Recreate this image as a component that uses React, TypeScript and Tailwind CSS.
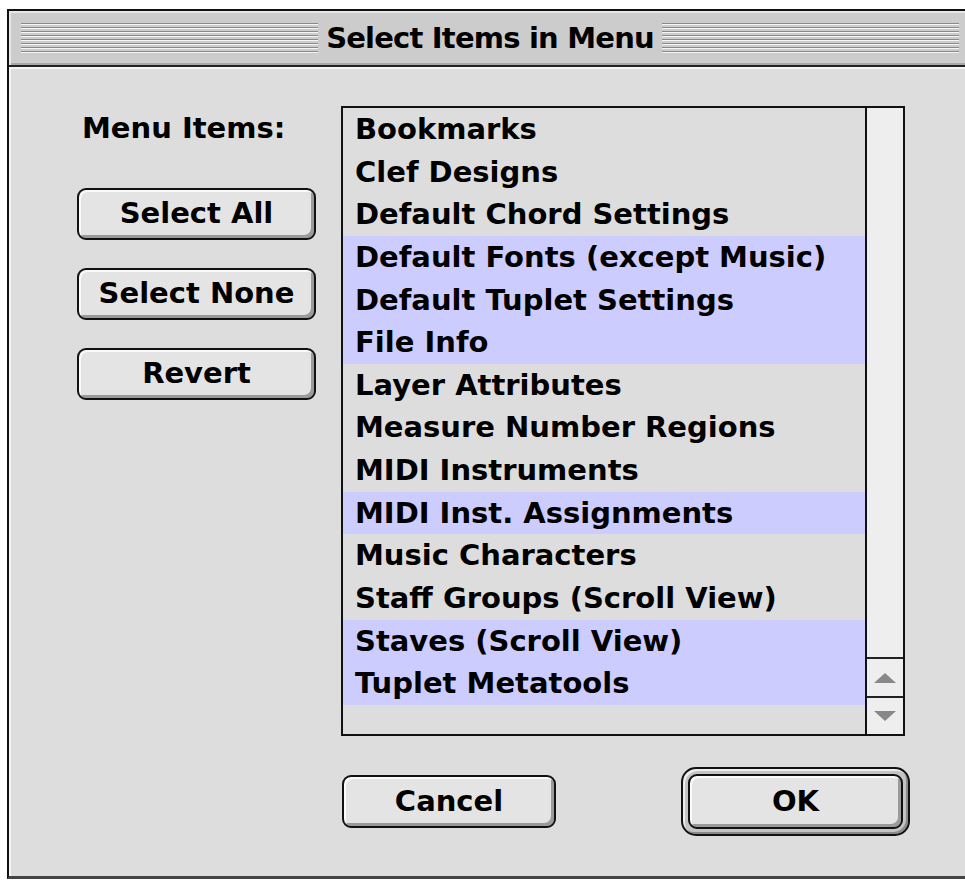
const menuItems = [
  { label: "Bookmarks", selected: false },
  { label: "Clef Designs", selected: false },
  { label: "Default Chord Settings", selected: false },
  { label: "Default Fonts (except Music)", selected: true },
  { label: "Default Tuplet Settings", selected: true },
  { label: "File Info", selected: true },
  { label: "Layer Attributes", selected: false },
  { label: "Measure Number Regions", selected: false },
  { label: "MIDI Instruments", selected: false },
  { label: "MIDI Inst. Assignments", selected: true },
  { label: "Music Characters", selected: false },
  { label: "Staff Groups (Scroll View)", selected: false },
  { label: "Staves (Scroll View)", selected: true },
  { label: "Tuplet Metatools", selected: true },
];

const platinumButton =
  "flex shrink-0 items-center justify-center rounded-[9px] border-2 border-[#111] bg-[#e4e4e4] shadow-[inset_2px_2px_0_#fafafa,inset_-3px_-3px_0_#9a9a9a] text-black";

function Stripes() {
  return (
    <div className="h-[30px] flex-1 bg-[repeating-linear-gradient(to_bottom,#8a8a8a_0px,#8a8a8a_1px,#f6f6f6_1px,#f6f6f6_2px,#cccccc_2px,#cccccc_4px)]" />
  );
}

function Arrow({ up }: { up?: boolean }) {
  return (
    <svg width="24" height="12" viewBox="0 0 24 12">
      {up ? <polygon points="12,1 23,11 1,11" fill="#888" /> : <polygon points="1,1 23,1 12,11" fill="#888" />}
    </svg>
  );
}

export default function App() {
  return (
    <div className="h-screen w-screen overflow-hidden bg-white pl-[7px] pt-[9px] font-['DejaVu_Sans','Liberation_Sans',sans-serif] font-bold text-black">
      <div className="flex h-[870px] w-[966px] flex-col border-l-2 border-t-2 border-r-2 border-[#111] border-b-[3px] border-b-[#444]">
        {/* title bar */}
        <div className="flex h-[54px] shrink-0 items-center bg-[#cccccc] px-[12px] shadow-[inset_2px_2px_0_#e8e8e8,inset_-2px_-2px_0_#a8a8a8]">
          <Stripes />
          <div className="px-[8px] text-[29px] leading-none tracking-[-0.8px]">Select Items in Menu</div>
          <Stripes />
        </div>
        <div className="h-[2px] shrink-0 bg-[#222]" />

        {/* dialog body */}
        <div className="flex flex-1 bg-[#dddddd] shadow-[inset_2px_2px_0_#f4f4f4]">
          <div className="ml-[68px] flex w-[239px] shrink-0 flex-col pt-[40px]">
            <div className="ml-[5px] text-[29px] leading-[42px]">Menu Items:</div>
            <div className="mt-[39px] flex flex-col gap-[28px]">
              {["Select All", "Select None", "Revert"].map((b) => (
                <button key={b} className={`${platinumButton} h-[52px] w-full text-[29px]`}>
                  {b}
                </button>
              ))}
            </div>
          </div>

          <div className="ml-[25px] flex shrink-0 flex-col pt-[39px]">
            <div className="flex h-[630px] w-[564px] border-2 border-[#111] bg-[#dddddd]">
              <div className="flex w-[522px] flex-col">
                {menuItems.map((item) => (
                  <div
                    key={item.label}
                    className={`h-[42.65px] whitespace-nowrap pl-[12px] text-[29px] leading-[42.65px] ${item.selected ? "bg-[#ccccff]" : ""}`}
                  >
                    {item.label}
                  </div>
                ))}
              </div>
              <div className="flex w-[38px] flex-col border-l-2 border-[#111] bg-[#eeeeee]">
                <div className="flex-1" />
                <div className="flex h-[39px] items-center justify-center border-t-2 border-[#222]">
                  <Arrow up />
                </div>
                <div className="flex h-[38px] items-center justify-center border-t-2 border-[#222]">
                  <Arrow />
                </div>
              </div>
            </div>

            <div className="ml-[1px] mt-[31px] flex w-[568px] items-center justify-between">
              <button className={`${platinumButton} h-[53px] w-[214px] text-[29px]`}>Cancel</button>
              <div className="shrink-0 rounded-[15px] border-2 border-[#111] bg-[#c4c4c4] p-[5px] shadow-[inset_2px_2px_0_#eeeeee,inset_-2px_-2px_0_#8a8a8a]">
                <button className={`${platinumButton} h-[55px] w-[215px] text-[29px]`}>OK</button>
              </div>
            </div>
          </div>
        </div>
      </div>
    </div>
  );
}
